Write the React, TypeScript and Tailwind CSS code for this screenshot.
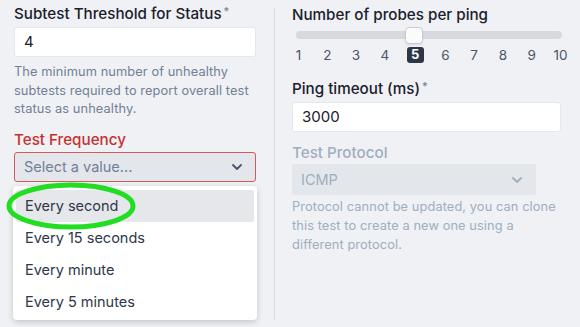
import React from 'react';
import { ChevronDown } from 'lucide-react';

// ─── Constants ───────────────────────────────────────────────────────

const FREQUENCIES = ['Every second', 'Every 15 seconds', 'Every minute', 'Every 5 minutes'];
const PROBES = [1, 2, 3, 4, 5, 6, 7, 8, 9, 10];
const SELECTED_PROBES = 5;

// ─── Pieces ──────────────────────────────────────────────────────────

function Label({ text, required, tone = 'default' }: { text: string; required?: boolean; tone?: 'default' | 'error' | 'disabled' }) {
    const color =
        tone === 'error' ? 'text-[#c53030]' : tone === 'disabled' ? 'text-[#a0aec0]' : 'text-[#1a202c]';
    return (
        <div className={`h-[20px] text-[15.2px] leading-[20px] font-medium ${color}`}>
            {text}
            {required && <span className="ml-[2px] align-top text-[11px] leading-[14px] text-[#718096]">*</span>}
        </div>
    );
}

function TextInput({ value, className = '' }: { value: string; className?: string }) {
    return (
        <div
            className={`flex h-[30px] items-center rounded-[3px] border border-[#e2e8f0] bg-white pl-[9px] text-[15px] text-[#1a202c] ${className}`}
        >
            {value}
        </div>
    );
}

// ─── Component ───────────────────────────────────────────────────────

export default function App() {
    return (
        <div className="relative flex h-[327px] w-[580px] overflow-hidden bg-[#eff1f4] font-['Inter',sans-serif]">
            {/* ── Left column ── */}
            <div className="relative ml-[14px] w-[242px] pt-[4px]">
                <Label text="Subtest Threshold for Status" required />
                <TextInput value="4" className="mt-[3px]" />
                <p className="mt-[6px] text-[12.8px] leading-[18.5px] tracking-[0.1px] text-[#718096]">
                    The minimum number of unhealthy subtests required to report overall test status as unhealthy.
                </p>

                <div className="mt-[11px]">
                    <Label text="Test Frequency" tone="error" />
                </div>
                <div className="mt-[2px] flex h-[30px] items-center justify-between rounded-[3px] border border-[#d25a5a] bg-[#e3e6eb] pl-[9px] pr-[10px] text-[14.5px] text-[#718096]">
                    <span>Select a value...</span>
                    <ChevronDown size={16} strokeWidth={2.75} className="text-[#4a5568]" />
                </div>

                {/* dropdown menu */}
                <div className="absolute left-[-1px] top-[186px] w-[244px] rounded-[4px] bg-white pt-[4px] pb-[2px] shadow-[0_2px_6px_rgba(0,0,0,0.18)]">
                    {FREQUENCIES.map((f, i) => (
                        <div
                            key={f}
                            className={`mx-[3px] flex h-[32px] items-center rounded-[2px] pl-[9px] text-[14.5px] text-[#2d3748] ${
                                i === 0 ? 'bg-[#e5e7eb]' : ''
                            }`}
                        >
                            {f}
                        </div>
                    ))}
                </div>
            </div>

            {/* ── Divider ── */}
            <div className="ml-[18px] mt-[8px] h-[312px] w-px bg-[#d9dce1]" />

            {/* ── Right column ── */}
            <div className="ml-[17px] w-[270px] pt-[5px]">
                <Label text="Number of probes per ping" />

                {/* slider */}
                <div className="relative ml-[4px] mt-[6px] h-[8px] w-[266px] rounded-full bg-[#d6d9de]">
                    <div className="absolute left-[109px] top-[-4px] h-[17px] w-[18px] rounded-[4px] border border-[#c9cdd3] bg-[#fbfbfc] shadow-[0_1px_2px_rgba(0,0,0,0.1)]" />
                </div>
                <div className="ml-[-0.5px] mr-[-5.5px] mt-[8px] flex h-[16px] items-center justify-between text-[13.5px] text-[#4a5568]">
                    {PROBES.map((n) =>
                        n === SELECTED_PROBES ? (
                            <span
                                key={n}
                                className="flex h-[16px] w-[17px] items-center justify-center rounded-[3px] bg-[#2d3748] text-[13px] font-bold text-white"
                            >
                                {n}
                            </span>
                        ) : (
                            <span key={n} className="w-[14px] text-center">
                                {n}
                            </span>
                        )
                    )}
                </div>

                <div className="mt-[16px]">
                    <Label text="Ping timeout (ms)" required />
                </div>
                <TextInput value="3000" className="mt-[3px] w-[269px]" />

                <div className="mt-[11px]">
                    <Label text="Test Protocol" tone="disabled" />
                </div>
                <div className="mt-[1px] flex h-[31px] w-[244px] items-center justify-between rounded-[3px] bg-[#e3e6eb] pl-[9px] pr-[11px] text-[14.5px] text-[#a0aec0]">
                    <span>ICMP</span>
                    <ChevronDown size={16} strokeWidth={2.75} className="text-[#a0aec0]" />
                </div>
                <p className="mt-[2px] text-[12.8px] leading-[19px] tracking-[0.1px] text-[#a0aec0]">
                    Protocol cannot be updated, you can clone this test to create a new one using a different protocol.
                </p>
            </div>

            {/* ── Annotation ── */}
            <svg className="absolute left-[4px] top-[181px]" width="136" height="50" viewBox="0 0 136 50">
                <ellipse cx="67" cy="25" rx="62" ry="21" fill="none" stroke="#22dd22" strokeWidth="5" />
            </svg>
        </div>
    );
}
